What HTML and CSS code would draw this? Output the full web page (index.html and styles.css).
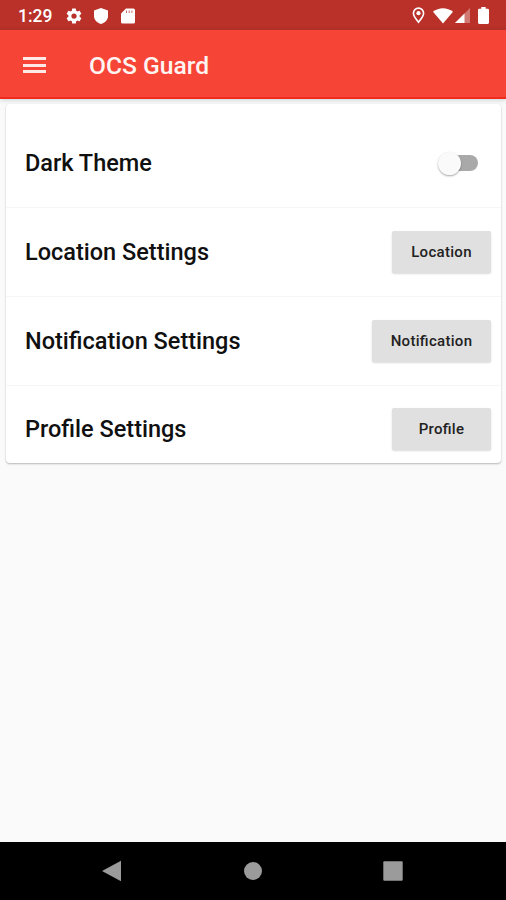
FILE: index.html
```html
<!DOCTYPE html>
<html lang="en">
<head>
  <meta charset="UTF-8">
  <title>OCS Guard</title>
  <link rel="stylesheet" href="styles.css">
</head>
<body>
  <div class="status-bar">
    <span class="clock">1:29</span>
    <svg class="icon-gear" width="18" height="18" viewBox="0 0 24 24" fill="#fff"><path d="M19.43 12.98c.04-.32.07-.64.07-.98s-.03-.66-.07-.98l2.11-1.65c.19-.15.24-.42.12-.64l-2-3.46c-.12-.22-.39-.3-.61-.22l-2.49 1c-.52-.4-1.08-.73-1.69-.98l-.38-2.65A.49.49 0 0 0 14 2h-4c-.25 0-.46.18-.49.42l-.38 2.65c-.61.25-1.17.59-1.69.98l-2.49-1c-.23-.09-.49 0-.61.22l-2 3.46c-.13.22-.07.49.12.64l2.11 1.65c-.04.32-.07.65-.07.98s.03.66.07.98l-2.11 1.65c-.19.15-.24.42-.12.64l2 3.46c.12.22.39.3.61.22l2.49-1c.52.4 1.08.73 1.69.98l.38 2.65c.03.24.24.42.49.42h4c.25 0 .46-.18.49-.42l.38-2.65c.61-.25 1.17-.59 1.69-.98l2.49 1c.23.09.49 0 .61-.22l2-3.46c.12-.22.07-.49-.12-.64l-2.11-1.65zM12 15.5a3.5 3.5 0 1 1 0-7 3.5 3.5 0 0 1 0 7z"/></svg>
    <svg class="icon-shield" width="14" height="16" viewBox="0 0 14 16" fill="#fff"><path d="M7 0 L14 2.6 V8 C14 11.8 11 14.8 7 16 C3 14.8 0 11.8 0 8 V2.6 Z"/></svg>
    <svg class="icon-sd" width="14" height="16" viewBox="0 0 14 16"><path fill="#fff" d="M5 0.5 H12.4 Q14 .5 14 2 V14 Q14 15.5 12.4 15.5 H1.6 Q0 15.5 0 14 V5.5 Z"/><path stroke="#b93129" stroke-opacity=".7" d="M5.5 2.5V5 M8.2 2.5V5 M10.9 2.5V5"/></svg>
    <div class="status-right">
      <svg width="13" height="17" viewBox="0 0 13 17"><path fill="none" stroke="#fff" stroke-width="1.6" d="M6.5 15.3 C4 12 1.4 9.2 1.4 6.2 A5.1 5.1 0 0 1 11.6 6.2 C11.6 9.2 9 12 6.5 15.3 Z"/><circle cx="6.5" cy="6.2" r="2.1" fill="#fff"/></svg>
      <svg class="icon-wifi" width="20" height="16" viewBox="0 0 20 16" fill="#fff"><path d="M0 3.8 C5.6 -.9 14.4 -.9 20 3.8 L10 15.6 Z"/></svg>
      <svg class="icon-signal" width="15" height="15" viewBox="0 0 15 15" fill="#fff"><path opacity=".35" d="M15 0 V15 H0 Z"/><path d="M9.5 5.5 V15 H0 Z"/></svg>
      <svg class="icon-battery" width="11" height="17" viewBox="0 0 11 17" fill="#fff"><path d="M3.3 0 H7.7 V1.8 H9.8 Q11 1.8 11 3 V15.6 Q11 17 9.8 17 H1.2 Q0 17 0 15.6 V3 Q0 1.8 1.2 1.8 H3.3 Z"/></svg>
    </div>
  </div>

  <header class="app-bar">
    <div class="menu"><span></span><span></span><span></span></div>
    <h1>OCS Guard</h1>
  </header>

  <main>
    <div class="card">
      <div class="row first">
        <span class="label">Dark Theme</span>
        <div class="switch"><div class="thumb"></div></div>
      </div>
      <div class="row">
        <span class="label">Location Settings</span>
        <button>Location</button>
      </div>
      <div class="row">
        <span class="label">Notification Settings</span>
        <button class="wide">Notification</button>
      </div>
      <div class="row last">
        <span class="label">Profile Settings</span>
        <button>Profile</button>
      </div>
    </div>
  </main>

  <nav class="nav-bar">
    <svg width="20" height="22" viewBox="0 0 20 22" fill="#9b9b9b"><path d="M19 .8 V21.2 L0 11 Z"/></svg>
    <svg width="18" height="18" viewBox="0 0 18 18" fill="#9b9b9b"><circle cx="9" cy="9" r="9"/></svg>
    <svg width="20" height="20" viewBox="0 0 20 20" fill="#9b9b9b"><rect x=".3" y=".3" width="19.4" height="19.4" rx="1"/></svg>
  </nav>
</body>
</html>
```
FILE: styles.css
```css
* {
  box-sizing: border-box;
}

body {
  margin: 0;
  height: 900px;
  display: flex;
  flex-direction: column;
  background: #fafafa;
  font-family: Roboto, 'Liberation Sans', sans-serif;
  overflow: hidden;
}

.status-bar {
  height: 30px;
  background: #b93129;
  display: flex;
  align-items: center;
  padding: 1px 17px 0 18px;
  color: white;
}

.clock {
  width: 47px;
  font-size: 17.5px;
  font-weight: 500;
}

.icon-shield {
  margin-left: 11px;
}

.icon-sd {
  margin-left: 13px;
}

.status-right {
  margin-left: auto;
  display: flex;
  align-items: center;
}

.icon-wifi {
  margin-left: 8px;
}

.icon-signal {
  margin-left: 2px;
}

.icon-battery {
  margin-left: 8px;
}

.app-bar {
  height: 69px;
  background: #f64436;
  border-bottom: 2px solid #f02a1c;
  display: flex;
  align-items: center;
  padding: 3px 23px 0 23px;
  box-shadow: 0 1px 5px rgba(0, 40, 40, 0.2);
}

.menu {
  width: 23px;
  height: 16px;
  display: flex;
  flex-direction: column;
  justify-content: space-between;
}

.menu span {
  height: 3px;
  background: #ffe9e7;
}

h1 {
  margin: 0 0 0 43px;
  color: #fff4f2;
  font-size: 24.6px;
  font-weight: 500;
}

main {
  flex: 1;
  padding: 5px 5px 0 6px;
}

.card {
  background: white;
  border-radius: 4px;
  box-shadow: 0 1px 2px rgba(0, 0, 0, 0.28);
}

.row {
  height: 89px;
  display: flex;
  align-items: center;
  justify-content: space-between;
  padding: 0 10px 0 19px;
  border-bottom: 1px solid #f6f6f6;
}

.row.first {
  height: 104px;
  padding-top: 15px;
  padding-right: 22px;
}

.row.last {
  height: 77px;
  padding-top: 9px;
  border-bottom: none;
}

.label {
  font-size: 23.5px;
  font-weight: 500;
  color: #101010;
}

.switch {
  width: 37px;
  height: 16px;
  margin-right: 1px;
  border-radius: 8px;
  background: #a9a9a9;
  display: flex;
  align-items: center;
}

.thumb {
  width: 23px;
  height: 23px;
  flex: none;
  margin-left: -3px;
  border-radius: 50%;
  background: #fafafa;
  box-shadow: 0 1px 2px rgba(0, 0, 0, 0.35);
}

button {
  width: 99px;
  height: 42px;
  padding: 0;
  border: none;
  border-radius: 2px;
  background: #e0e0e0;
  box-shadow: 0 1px 2px rgba(0, 0, 0, 0.15);
  color: #222;
  font-family: inherit;
  font-size: 15px;
  font-weight: 500;
  letter-spacing: 0.3px;
  font-feature-settings: 'liga' 1;
}

button.wide {
  width: 119px;
}

.nav-bar {
  height: 58px;
  background: black;
  display: flex;
  align-items: center;
  justify-content: space-between;
  padding: 0 103px 0 102px;
}
```
